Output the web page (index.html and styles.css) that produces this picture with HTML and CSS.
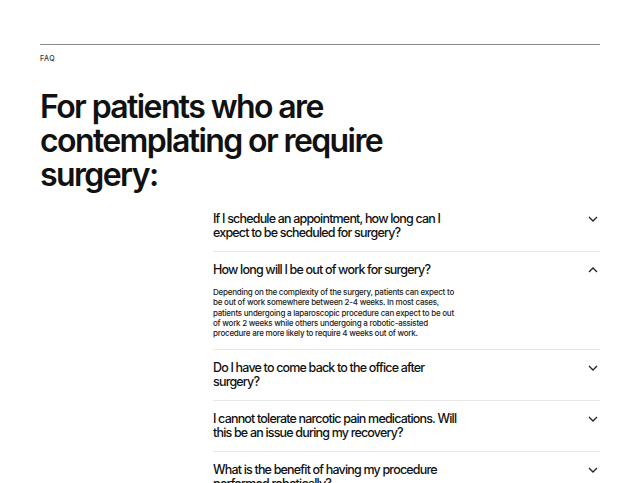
FILE: index.html
```html
<!DOCTYPE html>
<html lang="en">
<head>
<meta charset="utf-8">
<title>FAQ</title>
<link rel="stylesheet" href="styles.css">
</head>
<body>
<section class="faq">
  <div class="rule"></div>
  <div class="label">FAQ</div>
  <h1 class="title">For patients who are contemplating or require surgery:</h1>
  <div class="grid">
    <div class="spacer"></div>
    <div class="list">
      <div class="item">
        <div class="q"><span class="qt">If I schedule an appointment, how long can I expect to be scheduled for surgery?</span>
          <svg class="chev" viewBox="0 0 10 6" width="10" height="6"><path d="M1 1l4 4 4-4"/></svg></div>
      </div>
      <div class="item open">
        <div class="q"><span class="qt">How long will I be out of work for surgery?</span>
          <svg class="chev" viewBox="0 0 10 6" width="10" height="6"><path d="M1 5l4-4 4 4"/></svg></div>
        <p class="a">Depending on the complexity of the surgery, patients can expect to be out of work somewhere between 2-4 weeks. In most cases, patients undergoing a laparoscopic procedure can expect to be out of work 2 weeks while others undergoing a robotic-assisted procedure are more likely to require 4 weeks out of work.</p>
      </div>
      <div class="item">
        <div class="q"><span class="qt">Do I have to come back to the office after surgery?</span>
          <svg class="chev" viewBox="0 0 10 6" width="10" height="6"><path d="M1 1l4 4 4-4"/></svg></div>
      </div>
      <div class="item">
        <div class="q"><span class="qt">I cannot tolerate narcotic pain medications. Will this be an issue during my recovery?</span>
          <svg class="chev" viewBox="0 0 10 6" width="10" height="6"><path d="M1 1l4 4 4-4"/></svg></div>
      </div>
      <div class="item">
        <div class="q"><span class="qt">What is the benefit of having my procedure performed robotically?</span>
          <svg class="chev" viewBox="0 0 10 6" width="10" height="6"><path d="M1 1l4 4 4-4"/></svg></div>
      </div>
    </div>
  </div>
</section>
</body>
</html>
```
FILE: styles.css
```css
html, body {
  margin: 0;
  padding: 0;
  background: #fff;
}
body {
  font-family: Inter, "Noto Sans", "Liberation Sans", sans-serif;
  color: #111;
}
.faq {
  padding: 44px 40px 0 40px;
}
.rule {
  height: 1px;
  background: #8a8a8a;
}
.label {
  margin-top: 9px;
  font-size: 7px;
  line-height: 10px;
  font-weight: 500;
  letter-spacing: 0.08em;
  color: #333;
}
.title {
  margin: 26px 0 0 0;
  max-width: 380px;
  font-size: 32px;
  line-height: 34px;
  font-weight: 560;
  letter-spacing: -0.05em;
  color: #111;
}
.grid {
  display: grid;
  grid-template-columns: 173px 1fr;
  margin-top: 9px;
}
.item {
  padding: 11px 0 11px 0;
  border-bottom: 1px solid #e8e8e8;
}
.q {
  display: flex;
  justify-content: space-between;
  align-items: flex-start;
}
.qt {
  max-width: 252px;
  font-size: 12.5px;
  line-height: 14px;
  font-weight: 500;
  letter-spacing: -0.065em;
  color: #111;
}
.chev {
  margin-top: 4px;
  margin-right: 2px;
  fill: none;
  stroke: #222;
  stroke-width: 1.3;
}
.a {
  margin: 10px 0 0 0;
  max-width: 245px;
  font-size: 8px;
  line-height: 10.3px;
  font-weight: 500;
  letter-spacing: -0.03em;
  color: #222;
}
```
